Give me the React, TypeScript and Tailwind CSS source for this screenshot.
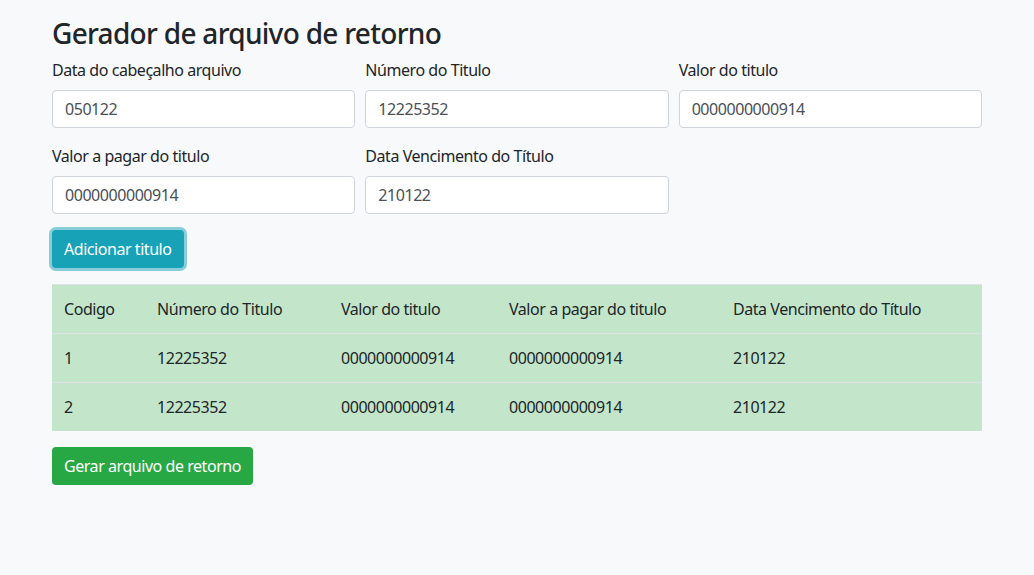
import { useState } from 'react';

type Titulo = {
  numero: string;
  valor: string;
  valorPagar: string;
  vencimento: string;
};

const font = { fontFamily: '"Noto Sans", "Open Sans", sans-serif' };

function Field({ label, value, onChange }: { label: string; value: string; onChange: (v: string) => void }) {
  return (
    <div className="mb-4 flex flex-col">
      <label className="mb-2 text-base leading-6 text-[#212529]">{label}</label>
      <input
        value={value}
        onChange={(e) => onChange(e.target.value)}
        className="h-[38px] w-full rounded border border-[#ced4da] bg-white px-3 text-base tracking-[-0.028em] text-[#495057] outline-none"
      />
    </div>
  );
}

export default function App() {
  const [dataCab, setDataCab] = useState('050122');
  const [numero, setNumero] = useState('12225352');
  const [valor, setValor] = useState('0000000000914');
  const [valorPagar, setValorPagar] = useState('0000000000914');
  const [vencimento, setVencimento] = useState('210122');
  const [titulos, setTitulos] = useState<Titulo[]>([
    { numero: '12225352', valor: '0000000000914', valorPagar: '0000000000914', vencimento: '210122' },
    { numero: '12225352', valor: '0000000000914', valorPagar: '0000000000914', vencimento: '210122' },
  ]);

  const adicionar = () => {
    setTitulos([...titulos, { numero, valor, valorPagar, vencimento }]);
  };

  return (
    <div className="min-h-[575px] bg-[#f8f9fa] tracking-[-0.028em] text-[#212529]" style={font}>
      <div className="mx-auto w-[960px] px-[15px] pt-4">
        <h3 className="mb-2 text-[28px] font-medium leading-[34px] tracking-[-0.025em]">Gerador de arquivo de retorno</h3>

        <div className="grid grid-cols-3 gap-x-[10px]">
          <Field label="Data do cabeçalho arquivo" value={dataCab} onChange={setDataCab} />
          <Field label="Número do Titulo" value={numero} onChange={setNumero} />
          <Field label="Valor do titulo" value={valor} onChange={setValor} />
          <Field label="Valor a pagar do titulo" value={valorPagar} onChange={setValorPagar} />
          <Field label="Data Vencimento do Título" value={vencimento} onChange={setVencimento} />
        </div>

        <button
          onClick={adicionar}
          className="h-[38px] rounded bg-[#17a2b8] px-3 text-base text-white shadow-[0_0_0_3px_rgba(23,162,184,0.5)]"
        >
          Adicionar titulo
        </button>

        <table className="mt-4 mb-4 w-full border-collapse bg-[#c3e6cb] text-left text-base">
          <thead>
            <tr>
              <th className="w-[93px] border-t border-[#dee2e6] p-3 font-normal">Codigo</th>
              <th className="w-[184px] border-t border-[#dee2e6] p-3 font-normal">Número do Titulo</th>
              <th className="w-[168px] border-t border-[#dee2e6] p-3 font-normal">Valor do titulo</th>
              <th className="w-[224px] border-t border-[#dee2e6] p-3 font-normal">Valor a pagar do titulo</th>
              <th className="border-t border-[#dee2e6] p-3 font-normal">Data Vencimento do Título</th>
            </tr>
          </thead>
          <tbody>
            {titulos.map((t, i) => (
              <tr key={i}>
                <td className="border-t border-[#dee2e6] p-3">{i + 1}</td>
                <td className="border-t border-[#dee2e6] p-3">{t.numero}</td>
                <td className="border-t border-[#dee2e6] p-3">{t.valor}</td>
                <td className="border-t border-[#dee2e6] p-3">{t.valorPagar}</td>
                <td className="border-t border-[#dee2e6] p-3">{t.vencimento}</td>
              </tr>
            ))}
          </tbody>
        </table>

        <button className="h-[38px] rounded bg-[#28a745] px-3 text-base text-white">Gerar arquivo de retorno</button>
      </div>
    </div>
  );
}
